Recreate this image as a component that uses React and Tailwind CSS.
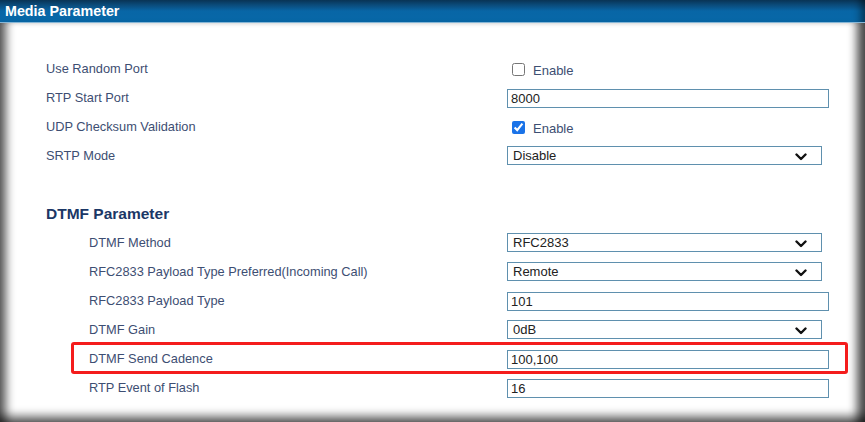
import { useState } from "react";

const font = { fontFamily: '"Liberation Sans", Arial, sans-serif' };

function Chevron() {
  return (
    <svg width="12" height="8" viewBox="0 0 12 8" className="absolute right-[14px] top-[6px]">
      <path d="M1.5 1.5 L6 6 L10.5 1.5" fill="none" stroke="#111" strokeWidth="2.4" strokeLinecap="round" strokeLinejoin="round" />
    </svg>
  );
}

function TextBox({ value }) {
  return (
    <input
      defaultValue={value}
      className="w-[322px] h-[19px] border border-[#5f90ae] bg-white px-[3px] text-[13px] text-[#222] outline-none"
      style={font}
    />
  );
}

function SelectBox({ value }) {
  return (
    <div className="relative w-[315px] h-[19px] border border-[#5f90ae] bg-white px-[5px] text-[13px] leading-[17px] text-[#222]">
      {value}
      <Chevron />
    </div>
  );
}

function Check({ checked }) {
  const [on, setOn] = useState(checked);
  return (
    <label className="flex items-center gap-[8px] pl-[5px] pt-[5px] text-[13px] text-[#3d4e72]">
      <input
        type="checkbox"
        checked={on}
        onChange={e => setOn(e.target.checked)}
        className="w-[13px] h-[13px] m-0 -mt-[3px] accent-[#1a73e8]"
      />
      Enable
    </label>
  );
}

function Row({ label, indent, children, highlight }) {
  return (
    <div className={`relative flex items-center h-[29px] ${indent ? "pl-[89px]" : "pl-[46px]"}`}>
      {highlight && (
        <span className="pointer-events-none absolute left-[71px] top-[-2px] w-[777px] h-[32px] border-[3px] border-[#f41c1c] rounded-[3px]" />
      )}
      <div className={`${indent ? "w-[418px]" : "w-[461px]"} text-[12.8px] text-[#3d4e72] mt-[1px]`}>{label}</div>
      <div>{children}</div>
    </div>
  );
}

export default function App() {
  return (
    <div className="w-[865px] h-[422px] overflow-hidden bg-white flex flex-col" style={font}>
      <div className="h-[23px] shrink-0 bg-gradient-to-b from-[#0a3658] via-[#0866a6] to-[#0868a8] border-b border-[#86b6d6] flex items-center pl-[5px] shadow-[inset_-10px_0_8px_-6px_rgba(0,0,0,0.5)]">
        <span className="text-white font-bold text-[14.3px] leading-none">Media Parameter</span>
      </div>
      <div className="flex-1 pt-[31px] shadow-[inset_12px_0_10px_-6px_rgba(0,0,0,0.65),inset_-14px_0_10px_-6px_rgba(0,0,0,0.7),inset_0_-12px_10px_-6px_rgba(0,0,0,0.6)]">
        <Row label="Use Random Port"><Check checked={false} /></Row>
        <Row label="RTP Start Port"><TextBox value="8000" /></Row>
        <Row label="UDP Checksum Validation"><Check checked={true} /></Row>
        <Row label="SRTP Mode"><SelectBox value="Disable" /></Row>

        <div className="h-[29px]" />
        <div className="h-[29px] flex items-center pl-[46px]">
          <h2 className="text-[15.5px] font-bold text-[#1b3766] mt-[1px]">DTMF Parameter</h2>
        </div>

        <Row indent label="DTMF Method"><SelectBox value="RFC2833" /></Row>
        <Row indent label="RFC2833 Payload Type Preferred(Incoming Call)"><SelectBox value="Remote" /></Row>
        <Row indent label="RFC2833 Payload Type"><TextBox value="101" /></Row>
        <Row indent label="DTMF Gain"><SelectBox value="0dB" /></Row>
        <Row indent highlight label="DTMF Send Cadence"><TextBox value="100,100" /></Row>
        <Row indent label="RTP Event of Flash"><TextBox value="16" /></Row>
      </div>
    </div>
  );
}
